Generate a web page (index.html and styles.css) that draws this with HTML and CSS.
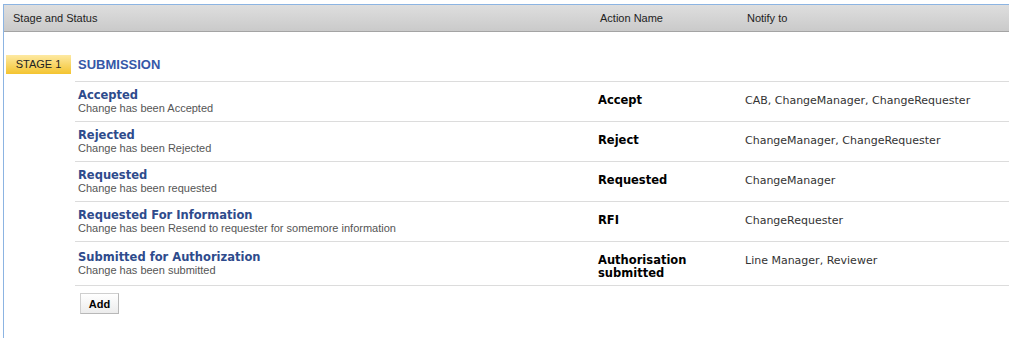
FILE: index.html
```html
<!DOCTYPE html>
<html lang="en">
<head>
    <meta charset="UTF-8">
    <meta name="viewport" content="width=device-width, initial-scale=1.0">
    <title>Stage and Status</title>
    <link rel="stylesheet" href="styles.css">
</head>
<body>

<div class="panel">
    <!-- Cabecera de columnas -->
    <div class="panel-head">
        <div class="head-stage">Stage and Status</div>
        <div class="head-action">Action Name</div>
        <div class="head-notify">Notify to</div>
    </div>

    <div class="stage">
        <div class="stage-head">
            <span class="stage-badge">STAGE 1</span>
            <div class="stage-title">SUBMISSION</div>
        </div>

        <div class="status-list">
            <div class="status-row">
                <div class="status-info">
                    <a class="status-name" href="#">Accepted</a>
                    <div class="status-desc">Change has been Accepted</div>
                </div>
                <div class="status-action">Accept</div>
                <div class="status-notify">CAB, ChangeManager, ChangeRequester</div>
            </div>
            <div class="status-row">
                <div class="status-info">
                    <a class="status-name" href="#">Rejected</a>
                    <div class="status-desc">Change has been Rejected</div>
                </div>
                <div class="status-action">Reject</div>
                <div class="status-notify">ChangeManager, ChangeRequester</div>
            </div>
            <div class="status-row">
                <div class="status-info">
                    <a class="status-name" href="#">Requested</a>
                    <div class="status-desc">Change has been requested</div>
                </div>
                <div class="status-action">Requested</div>
                <div class="status-notify">ChangeManager</div>
            </div>
            <div class="status-row">
                <div class="status-info">
                    <a class="status-name" href="#">Requested For Information</a>
                    <div class="status-desc">Change has been Resend to requester for somemore information</div>
                </div>
                <div class="status-action">RFI</div>
                <div class="status-notify">ChangeRequester</div>
            </div>
            <div class="status-row">
                <div class="status-info">
                    <a class="status-name" href="#">Submitted for Authorization</a>
                    <div class="status-desc">Change has been submitted</div>
                </div>
                <div class="status-action">Authorisation submitted</div>
                <div class="status-notify">Line Manager, Reviewer</div>
            </div>
        </div>

        <!-- Botón para añadir un estado -->
        <div class="stage-foot">
            <button class="add-button">Add</button>
        </div>
    </div>
</div>

</body>
</html>
```

FILE: styles.css
```css
body {
    font-family: "Liberation Sans", Arial, sans-serif;
    font-size: 11px;
    margin: 0;
    color: #222;
}
.panel {
    margin: 4px 0 0 3px;
    border-top: 1px solid #8cb4e2;
    border-left: 1px solid #8cb4e2;
    min-height: calc(100vh - 5px);
}
/* Cabecera gris */
.panel-head {
    display: grid;
    grid-template-columns: 591px 147px 1fr;
    height: 26px;
    line-height: 27px;
    background: linear-gradient(#dedede, #cacaca);
    border-bottom: 1px solid #a4a4a4;
}
.head-stage {
    padding-left: 9px;
}
.head-action,
.head-notify {
    padding-left: 5px;
}
/* Etapa */
.stage {
    padding-top: 23px;
}
.stage-head {
    display: flex;
    align-items: flex-start;
}
.stage-badge {
    width: 65px;
    height: 19px;
    line-height: 19px;
    margin: 0 4px 0 2px;
    text-align: center;
    color: #222;
    background: linear-gradient(#fde9a2, #f4c430);
}
.stage-title {
    flex: 1;
    padding: 0 0 7px 3px;
    line-height: 19px;
    font-size: 13px;
    font-weight: bold;
    color: #3558a8;
    border-bottom: 1px solid #dcdcdc;
}
.status-list {
    margin-left: 71px;
}
.status-row {
    display: grid;
    grid-template-columns: 520px 147px 1fr;
    border-bottom: 1px solid #dcdcdc;
}
.status-info {
    align-self: center;
    padding: 6px 0 6px 3px;
}
.status-name {
    display: block;
    line-height: 14px;
    font-family: "DejaVu Sans", Verdana, sans-serif;
    font-size: 11.5px;
    font-weight: bold;
    color: #2e4b8c;
    text-decoration: none;
}
.status-desc {
    line-height: 13px;
    color: #555;
}
.status-action {
    padding: 12px 3px 5px 3px;
    line-height: 13px;
    font-family: "DejaVu Sans", Verdana, sans-serif;
    font-size: 11.5px;
    font-weight: bold;
    color: #000;
}
.status-notify {
    padding: 12px 3px 5px 3px;
    line-height: 13px;
    font-family: "DejaVu Sans", Verdana, sans-serif;
    font-size: 11px;
    color: #333;
}
.stage-foot {
    padding: 7px 0 0 76px;
}
.add-button {
    width: 39px;
    height: 21px;
    padding: 0;
    font-family: "Liberation Sans", Arial, sans-serif;
    font-size: 11px;
    font-weight: bold;
    color: #000;
    background: linear-gradient(#ffffff, #ececec);
    border: 1px solid #cfcfcf;
    border-right-color: #b8b8b8;
    border-bottom-color: #b8b8b8;
    cursor: pointer;
}
```
